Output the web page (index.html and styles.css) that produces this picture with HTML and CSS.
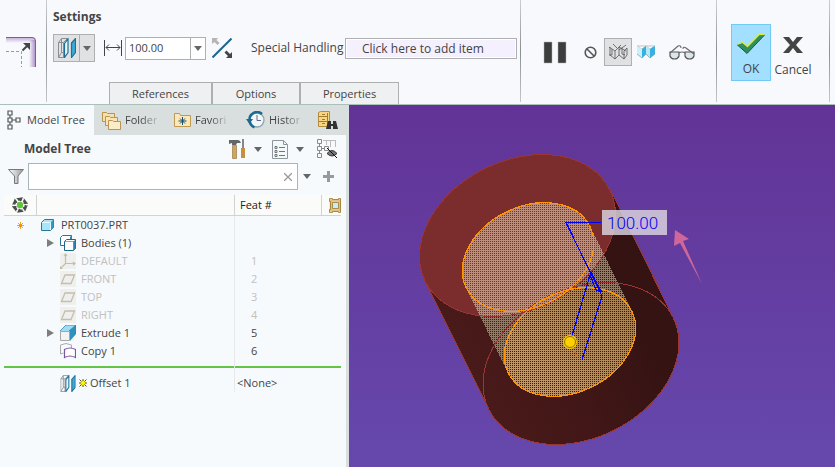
FILE: index.html
```html
<!DOCTYPE html>
<html lang="en">
<head>
    <meta charset="UTF-8">
    <meta name="viewport" content="width=device-width, initial-scale=1.0">
    <title>PRT0037 - Offset</title>
    <link rel="stylesheet" href="styles.css">
</head>
<body>

<!-- shared icons -->
<svg class="defs" width="0" height="0">
    <symbol id="i-caret" viewBox="0 0 8 5"><path d="M0 0h8L4 5z" fill="#666"/></symbol>
    <symbol id="i-offset" viewBox="0 0 18 20">
        <path d="M.5 4.500h5v15h-5zM3.500.500h6v14h-6zM.5 4.500l3-4M5.500 4.500l4-4M.5 19.500l3-5M5.500 19.500l3-3" fill="none" stroke="#8c8f92"/>
        <path d="M6.500 5.500l3.500-4.500v13.500l-3.500 5z" fill="#eaf7fc" stroke="#1d6f96" stroke-width="1.200"/>
        <path d="M13.500 5l4-4.500v14l-4 5z" fill="#3fa9d4" stroke="#1d6f96" stroke-width="1.200"/>
    </symbol>
    <symbol id="i-plane" viewBox="0 0 16 16">
        <path d="M0 0h16v16H0z" fill="#efefee"/>
        <path d="M5 4h9.500l-3.500 8.500H1.500z" fill="none" stroke="#c5bfaa" stroke-width="1.300"/>
    </symbol>
    <symbol id="i-arrow" viewBox="0 0 7 8"><path d="M0 0l7 4-7 4z" fill="#7d7d7d"/></symbol>
</svg>

<header class="ribbon">
    <div class="group shape-group">
        <svg width="30" height="30" viewBox="0 0 30 30">
            <defs>
                <linearGradient id="edgeR"><stop offset="0" stop-color="#8b62b4" stop-opacity="0"/><stop offset="1" stop-color="#8b62b4" stop-opacity=".75"/></linearGradient>
                <linearGradient id="edgeT" x2="0" y2="1"><stop offset="0" stop-color="#8b62b4" stop-opacity=".55"/><stop offset="1" stop-color="#8b62b4" stop-opacity="0"/></linearGradient>
            </defs>
            <path d="M23 3h5q2 0 2 2v25h-7z" fill="url(#edgeR)"/>
            <path d="M0 0h26q3 0 4 3v3H0z" fill="url(#edgeT)"/>
            <path d="M0 .5h26q3.500 0 3.500 3.500v26" fill="none" stroke="#86589f"/>
            <path d="M0 14.500h15.500V30" fill="none" stroke="#999" stroke-dasharray="3 2"/>
            <path d="M16.500 13.500l5-5" stroke="#444" stroke-width="2"/><path d="M17 6h7v7z" fill="#444"/>
        </svg>
    </div>

    <div class="group settings-group">
        <h2>Settings</h2>
        <div class="controls">
            <div class="split">
                <button aria-label="Offset type"><svg width="18" height="20"><use href="#i-offset"/></svg></button>
                <button class="drop" aria-label="More offset types"><svg width="8" height="5"><use href="#i-caret"/></svg></button>
            </div>
            <svg class="dim" width="18" height="16" viewBox="0 0 18 16">
                <path d="M.5 0v16M17.500 0v16M2 7.500h14M5 4.500l-3 3 3 3M13 4.500l3 3-3 3" fill="none" stroke="#444"/>
            </svg>
            <div class="combo">
                <input type="text" value="100.00" aria-label="Offset value">
                <button class="drop" aria-label="Recent values"><svg width="8" height="5"><use href="#i-caret"/></svg></button>
            </div>
            <button class="icon-btn flip" aria-label="Flip direction">
                <svg width="20" height="20" viewBox="0 0 20 20">
                    <path d="M0 0h6L4.500 2l3 3-2 2-3-3L0 6z" fill="#b5b5b5"/>
                    <path d="M20 20h-6l2-2-3.500-3.500 2-2L18 16l2-2z" fill="#444"/>
                    <path d="M.5 19.500L19.500.5" stroke="#1c668d" stroke-width="2"/>
                </svg>
            </button>
            <label for="special">Special Handling</label>
            <input type="text" id="special" value="Click here to add item" readonly>
        </div>
        <nav class="ribbon-tabs">
            <button>References</button>
            <button>Options</button>
            <button>Properties</button>
        </nav>
    </div>

    <div class="group preview-group">
        <button class="icon-btn pause" aria-label="Pause">
            <svg width="24" height="23" viewBox="0 0 24 23"><path d="M1 1h8v21H1zM15 1h8v21h-8z" fill="#3d3d3d" stroke="#b5b5b5" stroke-width=".5"/></svg>
        </button>
        <button class="icon-btn none" aria-label="No preview">
            <svg width="13" height="13" viewBox="0 0 13 13"><circle cx="6.500" cy="6.500" r="5.300" fill="none" stroke="#555" stroke-width="1.600"/><path d="M3 3l7 7" stroke="#555" stroke-width="1.600"/></svg>
        </button>
        <button class="icon-btn attached" aria-label="Unattached preview">
            <svg width="20" height="18" viewBox="0 0 20 18" fill="none" stroke="#555" stroke-width=".8">
                <path d="M1 4l6 4 6-6M7 8v8l4-4V4l7 4M2 4v8l5 4M11 12l5 4V8l3-3v7l-3 4M5 1l4 4M18 2l-7 5M4 6v6H1M14 5v6l3 1"/>
            </svg>
        </button>
        <button class="icon-btn attach" aria-label="Attached preview">
            <svg width="18" height="14" viewBox="0 0 18 14">
                <path d="M0 1h9L5 4zM9 1h9l-5 3z" fill="#fff" stroke="#aaa" stroke-width=".7"/>
                <path d="M0 1l5 3v9L0 9z" fill="#c9f0fb"/><path d="M5 4l4-3v8l-4 4z" fill="#35b1e2"/>
                <path d="M9 1l4 3v9L9 9z" fill="#b5e8f8"/><path d="M13 4l5-3v8l-5 4z" fill="#35b1e2"/>
                <path d="M0 9l5 4 4-4 4 4 5-4" fill="none" stroke="#8099a3" stroke-width=".7"/>
            </svg>
        </button>
        <button class="icon-btn" aria-label="Verify">
            <svg width="26" height="15" viewBox="0 0 26 15">
                <path d="M1 7h9v4q-1 3-4.500 3T1 11zM16 7h9v4q-1 3-4.500 3T16 11z" fill="#dce6ea" stroke="#555" stroke-width="1.200"/>
                <path d="M1 8l8-7q3-1 3 2M10 8q3-2 6 0M14 4q0-3 3-1l8 6" fill="none" stroke="#666" stroke-width="1.100"/>
            </svg>
        </button>
    </div>

    <div class="group confirm-group">
        <button class="ok">
            <svg width="28" height="20" viewBox="0 0 28 20"><path d="M.5 11l5-2 5 4L22 1h5.500L10 19.500z" fill="#2e8f5e" stroke="#1c5a3c"/><path d="M.5 10.500l5-2 5 4L22 .7h5.500" fill="none" stroke="#d9ee32" stroke-width="1.300"/></svg>
            OK
        </button>
        <button class="cancel">
            <svg width="20" height="16" viewBox="0 0 20 16"><path d="M0 0h6l4 5 4-5h6l-7 8 7 8h-6l-4-5-4 5H0l7-8z" fill="#444"/></svg>
            Cancel
        </button>
    </div>
</header>

<main>
    <aside class="panel">
        <nav class="panel-tabs">
            <button class="active">
                <svg width="14" height="20" viewBox="0 0 14 20" fill="none" stroke="#555" stroke-width="1.200"><path d="M1 1h4v4H1zM1 8h4v4H1zM1 15h4v4H1zM9 8h4v4H9zM3 5v3M3 12v3M5 10h4"/></svg>
                <span>Model Tree</span>
            </button>
            <button>
                <svg width="19" height="19" viewBox="0 0 19 19" stroke="#b58b3e" stroke-width=".9">
                    <path d="M.5 1.500h4l1 1h7v8H.5z" fill="#f5dfae"/><path d="M3.500 5.500h4l1 1h7v8h-12z" fill="#f8e5ba"/><path d="M6.500 9.500h4l1 1h7v8h-12z" fill="#fbedca"/>
                </svg>
                <span class="fade">Folder</span>
            </button>
            <button>
                <svg width="17" height="14" viewBox="0 0 17 14"><path d="M.5.500h5l1 2h10v11H.5z" fill="#fbe7b8" stroke="#c09a50"/><path d="M8.500 4v8M4.500 8h8M6 5.500l5 5M11 5.500l-5 5" stroke="#16516f"/></svg>
                <span class="fade">Favori</span>
            </button>
            <button>
                <svg width="19" height="18" viewBox="0 0 19 18"><circle cx="11" cy="9" r="7" fill="#f1f6f8" stroke="#8fa5ae" stroke-width="1.300"/><path d="M11 4v5.500h4" fill="none" stroke="#668"/><path d="M16 3A7.500 7.500 0 0 0 3.500 9q0 5 5 7.500" fill="none" stroke="#1d6a91" stroke-width="2.500"/><path d="M0 8h7l-3.500 5z" fill="#1d6a91"/></svg>
                <span class="fade">Histor</span>
            </button>
            <button class="search-tab" aria-label="Search results">
                <svg width="20" height="19" viewBox="0 0 20 19"><path d="M.5 1.500l2-1h9v14l-2 1h-9z" fill="#f6d583" stroke="#b58b3e"/><path d="M1 5.500h9M1 10.500h9M9.500 2v13M4 3.500h3M4 8.500h3M4 12.500h3" stroke="#a47a30"/><path d="M10 10h3v3h2v-3h3l2 8h-5v-3h-2v3H8z" fill="#333"/></svg>
            </button>
        </nav>

        <div class="panel-title">
            <h2>Model Tree</h2>
            <button class="icon-btn tools" aria-label="Tree settings">
                <svg width="17" height="20" viewBox="0 0 17 20"><path d="M0 1h9q2 0 3 3H8L7 6H3V4L0 5z" fill="#666"/><path d="M3.500 6.500h4v13h-4z" fill="#d3a45b" stroke="#8e6b35" stroke-width=".6"/><path d="M13 0h2v9h-2z" fill="#888"/><path d="M12 9h4v10h-4z" fill="#c88f3e"/></svg>
                <svg width="8" height="5"><use href="#i-caret"/></svg>
            </button>
            <button class="icon-btn show" aria-label="Show">
                <svg width="16" height="19" viewBox="0 0 16 19"><path d="M.5.500h11l4 4v14H.5z" fill="#f3f8fa" stroke="#8d979b"/><path d="M11.500.5v4h4" fill="none" stroke="#8d979b"/><path d="M3 6.500h2v2H3zM3 10.500h2v2H3zM3 14.500h2v2H3zM7 7.500h6M7 11.500h6M7 15.500h6" fill="none" stroke="#666" stroke-width=".9"/></svg>
                <svg width="8" height="5"><use href="#i-caret"/></svg>
            </button>
            <button class="icon-btn" aria-label="Column display">
                <svg width="21" height="20" viewBox="0 0 21 20" fill="none" stroke="#8b8b8b"><path d="M.5.500h4v4h-4zM.5 7.500h4v4h-4zM.5 14.500h4v4h-4zM7.500 7.500h4v4h-4zM2.500 5v2M2.500 12v2M5 9.500h2"/><path d="M6 1.500h13M9.500 2v4M13.500 2v6M18.500 2v6" stroke="#bbb"/><path d="M10 14.500q5-6 10 0-5 5-10 0z" fill="#777" stroke="#333"/><path d="M10 9l10 10" stroke="#111"/></svg>
            </button>
        </div>

        <div class="filter">
            <svg width="16" height="15" viewBox="0 0 16 15"><defs><linearGradient id="funnel"><stop offset="0" stop-color="#fff"/><stop offset="1" stop-color="#999"/></linearGradient></defs><path d="M.5.500h15L10 7v7.500H6.500V7z" fill="url(#funnel)" stroke="#777"/></svg>
            <div class="filter-box">
                <input type="text" aria-label="Filter tree">
                <button class="clear" aria-label="Clear filter"><svg width="8" height="8" viewBox="0 0 8 8"><path d="M0 0l8 8M8 0L0 8" stroke="#999" stroke-width="1.300"/></svg></button>
            </div>
            <button class="icon-btn" aria-label="Filter options"><svg width="8" height="5"><use href="#i-caret"/></svg></button>
            <button class="icon-btn plus" aria-label="Add"><svg width="11" height="11" viewBox="0 0 11 11"><path d="M5.500 0v11M0 5.500h11" stroke="#999" stroke-width="3"/></svg></button>
        </div>

        <table class="tree">
            <colgroup><col class="c-status"><col><col class="c-feat"><col class="c-end"></colgroup>
            <thead>
                <tr>
                    <th><svg width="16" height="16" viewBox="0 0 16 16">
                        <g fill="#4a4f4c">
                            <path d="M4 1.200L11 .3 9 4.500z"/><path d="M4 1.200L11 .3 9 4.500z" transform="rotate(60 8 8)"/><path d="M4 1.200L11 .3 9 4.500z" transform="rotate(120 8 8)"/>
                            <path d="M4 1.200L11 .3 9 4.500z" transform="rotate(180 8 8)"/><path d="M4 1.200L11 .3 9 4.500z" transform="rotate(240 8 8)"/><path d="M4 1.200L11 .3 9 4.500z" transform="rotate(300 8 8)"/>
                        </g>
                        <circle cx="8" cy="8" r="5.500" fill="none" stroke="#4a4f4c" stroke-width="1.600" stroke-dasharray="4 1.760"/>
                        <circle cx="8" cy="8" r="3.200" fill="#62c23e"/>
                    </svg></th>
                    <th></th>
                    <th>Feat #</th>
                    <th class="end"><svg width="12" height="15" viewBox="0 0 12 15"><path d="M2 2.500h9v10H2z" fill="#c4ecfa" stroke="#e6bf72" stroke-width="2.500"/><path d="M.5.500h3v1h6v-1h2v14h-2v-1h-6v1h-3v-3h1v-8h-1zM3.500 4.500h6v6h-6z" fill="none" stroke="#9b762f" stroke-width=".8"/></svg></th>
                </tr>
            </thead>
            <tbody>
                <tr class="root">
                    <td class="status"><svg width="7" height="7" viewBox="0 0 7 7"><path d="M3.500 0v7M0 3.500h7M1 1l5 5M6 1L1 6" stroke="#f7a11a"/><circle cx="3.500" cy="3.500" r="1.500" fill="#f58f00"/></svg></td>
                    <td><div class="node"><svg width="13" height="12" viewBox="0 0 13 12"><path d="M.5 3.500l3-3h9v8l-3 3h-9z" fill="#a9e5f8" stroke="#2b7698"/><path d="M9.500 3.500l3-3v8l-3 3z" fill="#2e9bc9"/><path d="M1 3.500h8.500V11" fill="none" stroke="#e9faff"/></svg>PRT0037.PRT</div></td>
                    <td></td><td></td>
                </tr>
                <tr>
                    <td></td>
                    <td><div class="node"><button class="expand" aria-label="Expand Bodies"><svg width="7" height="8"><use href="#i-arrow"/></svg></button><svg width="16" height="16" viewBox="0 0 16 16"><path d="M.5 2.500l2-2h9v8l-2 2h-9z" fill="#fff" stroke="#2b7698"/><path d="M10 2l2-2v4h-2z" fill="#2e83ad"/><path d="M4.500 6.500l2-2h9v9l-2 2h-9z" fill="#fff" stroke="#1c688c"/><path d="M13.500 6.500l2-2v9l-2 2z" fill="#2e83ad"/><path d="M4.500 6.500h9v9" fill="none" stroke="#2b7698" stroke-width=".6"/></svg>Bodies (1)</div></td>
                    <td></td><td></td>
                </tr>
                <tr class="muted">
                    <td></td>
                    <td><div class="node leaf"><svg width="16" height="16" viewBox="0 0 16 16"><path d="M0 0h16v16H0z" fill="#efefee"/><path d="M5.500 1v9.500H15M5.500 10.500L1 15M4 3l1.500-2L7 3M13 9l2 1.500-2 1.500" fill="none" stroke="#c5bfaa" stroke-width="1.200"/><path d="M0 13l3 3H0z" fill="#c5bfaa"/></svg>DEFAULT</div></td>
                    <td>1</td><td></td>
                </tr>
                <tr class="muted">
                    <td></td>
                    <td><div class="node leaf"><svg width="16" height="16"><use href="#i-plane"/></svg>FRONT</div></td>
                    <td>2</td><td></td>
                </tr>
                <tr class="muted">
                    <td></td>
                    <td><div class="node leaf"><svg width="16" height="16"><use href="#i-plane"/></svg>TOP</div></td>
                    <td>3</td><td></td>
                </tr>
                <tr class="muted">
                    <td></td>
                    <td><div class="node leaf"><svg width="16" height="16"><use href="#i-plane"/></svg>RIGHT</div></td>
                    <td>4</td><td></td>
                </tr>
                <tr>
                    <td></td>
                    <td><div class="node"><button class="expand" aria-label="Expand Extrude 1"><svg width="7" height="8"><use href="#i-arrow"/></svg></button><svg width="16" height="16" viewBox="0 0 16 16"><path d="M0 6l6-6h10v9l-6 6z" fill="#9ddcf2"/><path d="M9 6l7-6v9l-6 7z" fill="#2f91bd"/><path d="M9 6l7-6M0 6l6-6h9.500v9" fill="none" stroke="#3585a7" stroke-width=".8"/><path d="M.5 6.500h9v9h-9z" fill="#f3f3f3" stroke="#a6a6a6"/></svg>Extrude 1</div></td>
                    <td>5</td><td></td>
                </tr>
                <tr>
                    <td></td>
                    <td><div class="node leaf"><svg width="16" height="16" viewBox="0 0 16 16"><path d="M.5 11V2q5.500-3 11 0v3M.5 11l3-1" fill="none" stroke="#aaa"/><path d="M4.500 14.500v-8q5.500-3 11 0v8q-5.500-3-11 0z" fill="#fff" stroke="#7b56a0" stroke-width="1.200"/></svg>Copy 1</div></td>
                    <td>6</td><td></td>
                </tr>
                <tr class="insert-here">
                    <td><hr></td><td><hr></td><td><hr></td><td><hr></td>
                </tr>
                <tr>
                    <td></td>
                    <td><div class="node leaf new"><svg width="16" height="17" viewBox="0 0 18 20"><use href="#i-offset"/></svg><svg width="8" height="8" viewBox="0 0 8 8"><path d="M1.500 1.500h5v5h-5z" fill="#fff200"/><path d="M4 0v2M4 6v2M0 4h2M6 4h2M.5.5l2 2M7.500 7.500l-2-2M7.500.5l-2 2M.5 7.500l2-2" stroke="#555520"/></svg>Offset 1</div></td>
                    <td class="no-id">&lt;None&gt;</td><td></td>
                </tr>
            </tbody>
        </table>
    </aside>

    <section class="viewport">
        <svg class="model" width="486" height="362" viewBox="349 105 486 362">
            <defs>
                <linearGradient id="wall" gradientUnits="userSpaceOnUse" x1="450" y1="390" x2="630" y2="300">
                    <stop offset="0" stop-color="#4b1b1b"/>
                    <stop offset=".5" stop-color="#431717"/>
                    <stop offset="1" stop-color="#351313"/>
                </linearGradient>
                <linearGradient id="tan" gradientUnits="userSpaceOnUse" x1="505" y1="360" x2="635" y2="320">
                    <stop offset="0" stop-color="#c0976a"/>
                    <stop offset="1" stop-color="#a68052"/>
                </linearGradient>
                <!-- screen-door dots -->
                <pattern id="dots" width="2" height="2" patternUnits="userSpaceOnUse">
                    <path d="M0 0h2v2H1V1H0z" fill="#fff"/>
                </pattern>
                <mask id="screen" maskUnits="userSpaceOnUse" x="349" y="105" width="486" height="362">
                    <rect x="349" y="105" width="486" height="362" fill="url(#dots)"/>
                </mask>
                <clipPath id="topFace"><ellipse cx="517.500" cy="235.500" rx="103" ry="74.500" transform="rotate(-26.500 517.500 235.500)"/></clipPath>
                <!-- same wall shading, in a shape big enough for both -->
                <clipPath id="body">
                    <path d="M425 281L489 409L673 317L610 189z"/>
                    <ellipse cx="581" cy="363.500" rx="103" ry="74.500" transform="rotate(-26.500 581 363.500)"/>
                </clipPath>
            </defs>

            <!-- outer body -->
            <rect x="410" y="150" width="280" height="300" fill="url(#wall)" clip-path="url(#body)"/>
            <ellipse cx="517.500" cy="235.500" rx="103" ry="74.500" transform="rotate(-26.500 517.500 235.500)" fill="#7b2c2c"/>

            <!-- offset surface -->
            <g mask="url(#screen)" shape-rendering="crispEdges">
                <path d="M466 288L508 373L632 311L590 226z" fill="#917967"/>
                <g clip-path="url(#topFace)"><path d="M466 288L508 373L632 311L590 226z" fill="#b68b7b"/></g>
                <ellipse cx="570" cy="342" rx="69" ry="50" transform="rotate(-26.500 570 342)" fill="url(#tan)"/>
                <ellipse cx="528" cy="257" rx="69" ry="50" transform="rotate(-26.500 528 257)" fill="#bd8e7b"/>
            </g>

            <g fill="none" shape-rendering="crispEdges">
                <path d="M425 281L489 409M610 189L673 317" stroke="#993535"/>
                <ellipse cx="517.500" cy="235.500" rx="103" ry="74.500" transform="rotate(-26.500 517.500 235.500)" stroke="#993535"/>
                <ellipse cx="581" cy="363.500" rx="103" ry="74.500" transform="rotate(-26.500 581 363.500)" stroke="#993535"/>
                <ellipse cx="528" cy="257" rx="69" ry="50" transform="rotate(-26.500 528 257)" stroke="#ff9500" stroke-width="1.200"/>
                <ellipse cx="570" cy="342" rx="69" ry="50" transform="rotate(-26.500 570 342)" stroke="#ff9500" stroke-width="1.200"/>
            </g>

            <!-- dimension -->
            <path d="M601 222.500H566L602 296M591 272L571 339M602 296L582 360M591 272l11 24M590 275l6 15 5 2M593 278l9 14" fill="none" stroke="#00f" stroke-width="1.200" shape-rendering="crispEdges"/>
            <path d="M574 351l3 5" stroke="#d96d00"/>
            <circle cx="570" cy="342" r="7" fill="#ffd000"/>
            <circle cx="570" cy="342" r="5.500" fill="none" stroke="#8b7500"/>
            <rect x="602" y="210" width="65" height="25" fill="#dcd5e0" fill-opacity=".82"/>
            <text class="dim-text" x="607" y="229">100.00</text>

            <!-- pointer -->
            <path d="M675 230l14 9-6 2 19 43-22-41-6 3z" fill="#d0679b"/>
        </svg>
    </section>
</main>

</body>
</html>
```
FILE: styles.css
```css
* {
    box-sizing: border-box;
}

body {
    margin: 0;
    min-height: 100vh;
    display: flex;
    flex-direction: column;
    font-family: "Open Sans", "Noto Sans", sans-serif;
    font-size: 11px;
    line-height: 18px;
    color: #444;
    background-color: #f8f9fc;
}

.defs {
    position: absolute;
}

svg {
    display: block;
    flex: none;
}

h2 {
    margin: 0;
    font-size: 12px;
    line-height: 18px;
}

button, input {
    font: inherit;
    color: inherit;
    margin: 0;
    padding: 0;
    border: none;
    border-radius: 0;
    background: none;
}

button {
    display: flex;
    align-items: center;
    justify-content: center;
    cursor: pointer;
}

/* ribbon */
.ribbon {
    display: flex;
    height: 105px;
    border-bottom: 1px solid #abc0b9;
}

.group {
    position: relative;
    display: flex;
    flex: none;
}

.group::after {
    content: "";
    position: absolute;
    top: 0;
    right: 0;
    bottom: 2px;
    width: 1px;
    background: linear-gradient(#ccced0, #8c8f92 50%, #c4c6c8);
}

.shape-group {
    width: 47px;
    align-items: center;
    padding-left: 6px;
}

.settings-group {
    width: 474px;
    flex-direction: column;
    padding: 8px 4px 0 6px;
}

.controls {
    display: flex;
    align-items: center;
    height: 28px;
    margin-top: 8px;
}

.split {
    display: flex;
    height: 28px;
    width: 42px;
    border: 1px solid #adafb0;
    background-color: #dfe1e3;
}

.split button {
    flex: 1;
}

.split .drop {
    flex: none;
    width: 15px;
    border-left: 1px solid #adafb0;
}

.dim {
    margin: 0 3px 0 9px;
}

.combo {
    display: flex;
    width: 81px;
    height: 23px;
    border: 1px solid #adafb0;
    background-color: #fff;
}

.combo input {
    flex: 1;
    min-width: 0;
    padding-left: 3px;
}

.combo .drop {
    width: 15px;
    border-left: 1px solid #adafb0;
}

.flip {
    margin: 0 19px 0 6px;
}

.controls label {
    flex: 1;
    font-size: 12px;
    white-space: nowrap;
}

#special {
    width: 172px;
    height: 21px;
    padding-left: 16px;
    border: 1px solid #adafb0;
    background-color: #f4f0fd;
    box-shadow: inset 0 0 0 1px #fff;
    font-size: 12px;
}

.ribbon-tabs {
    display: flex;
    margin: auto 0 0 56px;
}

.ribbon-tabs button {
    width: 88px;
    height: 22px;
    border: 1px solid #adafb0;
    border-bottom: none;
    background-color: #eff0f2;
}

.ribbon-tabs button:first-child {
    width: 103px;
}

.ribbon-tabs button:last-child {
    width: 99px;
}

.preview-group {
    width: 196px;
    align-items: center;
    padding-left: 22px;
}

.pause {
    margin-right: 17px;
}

.none {
    margin-right: 7px;
}

.attached {
    width: 28px;
    height: 28px;
    border: 1px solid #adafb0;
    background-color: #dfe1e3;
}

.attach {
    margin: 0 14px 0 5px;
}

.confirm-group {
    width: 113px;
    align-items: center;
    gap: 2px;
    padding-left: 14px;
    font-size: 12px;
}

.confirm-group button {
    width: 40px;
    height: 57px;
    flex-direction: column;
    justify-content: flex-end;
    gap: 6px;
    padding-bottom: 2px;
}

.confirm-group .cancel {
    gap: 8px;
}

.confirm-group .ok {
    border: 1px solid #71caf5;
    background-color: #a3dffe;
}

/* panel */
main {
    flex: 1;
    display: flex;
}

.panel {
    width: 349px;
    flex: none;
    border-right: 3px solid #d8dfde;
    background-color: #f7fafc;
}

.panel-tabs {
    display: flex;
    height: 30px;
    background-color: #d8dfde;
}

.panel-tabs button {
    width: 72px;
    padding-left: 8px;
    gap: 4px;
    justify-content: flex-start;
}

.panel-tabs .active {
    width: 94px;
    padding-left: 7px;
    gap: 6px;
    background-color: #f7fafc;
    white-space: nowrap;
}

.panel-tabs .search-tab {
    width: 36px;
}

.fade {
    white-space: nowrap;
    -webkit-mask-image: linear-gradient(to right, #000 50%, rgba(0, 0, 0, 0.2));
    mask-image: linear-gradient(to right, #000 50%, rgba(0, 0, 0, 0.2));
}

.panel-title {
    display: flex;
    align-items: center;
    height: 28px;
    padding: 0 8px 0 24px;
}

.panel-title h2 {
    flex: 1;
}

.tools, .show {
    gap: 8px;
    margin-right: 10px;
}

.show {
    margin-right: 13px;
}

.filter {
    display: flex;
    align-items: center;
    height: 27px;
    padding: 0 12px 0 8px;
}

.filter-box {
    position: relative;
    flex: 1;
    margin: 0 5px 0 4px;
}

.filter-box input {
    display: block;
    width: 100%;
    height: 27px;
    padding: 0 20px 0 6px;
    border: 1px solid #abb5b7;
    background-color: #fff;
}

.clear {
    position: absolute;
    top: 0;
    right: 0;
    width: 20px;
    height: 27px;
}

.plus {
    margin-left: 12px;
}

/* tree */
.tree {
    width: 337px;
    margin: 5px 0 0 4px;
    border-collapse: separate;
    border-spacing: 0;
    table-layout: fixed;
}

.c-status {
    width: 33px;
}

.c-feat {
    width: 87px;
}

.c-end {
    width: 19px;
}

.tree th {
    height: 21px;
    padding: 0;
    border-right: 1px solid #d0d3d3;
    border-bottom: 1px solid #d0d3d3;
    background-color: #fbfbfa;
    color: #222;
    font-weight: normal;
    text-align: left;
}

.tree th:first-child svg {
    margin-left: 8px;
}

.tree th:nth-child(3) {
    padding-left: 5px;
}

.tree th.end {
    padding-left: 7px;
    border-right: none;
}

.tree td {
    height: 18px;
    padding: 0;
}

.tree td:nth-child(2) {
    border-right: 1px solid #e6e8e9;
}

.tree td:nth-child(3) {
    padding-left: 16px;
}

.tree td.no-id {
    padding-left: 2px;
}

.status svg {
    margin-left: 13px;
}

.node {
    display: flex;
    align-items: center;
    gap: 5px;
    height: 18px;
    padding-left: 9px;
    white-space: nowrap;
}

.root .node {
    padding-left: 4px;
    gap: 7px;
}

.leaf {
    padding-left: 23px;
}

.expand {
    width: 9px;
    height: 18px;
}

.new {
    gap: 3px;
}

.muted {
    color: #c0c0c0;
}

.tree .insert-here td {
    height: 14px;
    padding: 0;
}

.insert-here hr {
    height: 2px;
    margin: 0;
    border: none;
    background-color: #62c544;
}

/* graphics area */
.viewport {
    flex: 1;
    min-width: 0;
    overflow: hidden;
    background: linear-gradient(#623396, #6648ad);
}

.dim-text {
    font-family: Roboto, "Liberation Sans", sans-serif;
    font-size: 17px;
    font-weight: 300;
    fill: #0000f5;
}
```
